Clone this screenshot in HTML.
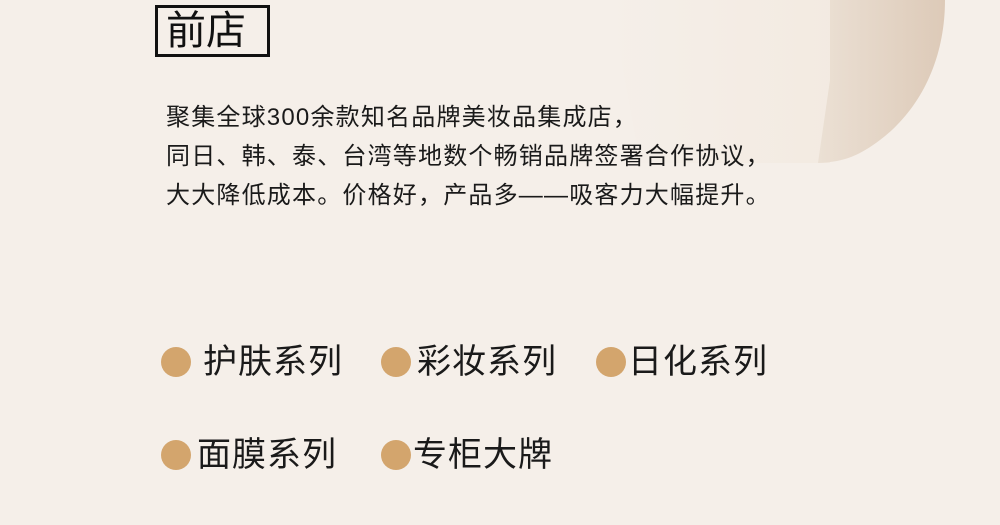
<!DOCTYPE html>
<html><head><meta charset="utf-8"><style>
body{margin:0;width:1000px;height:525px;overflow:hidden;background:#f5efe9;position:relative;font-family:"Liberation Sans","Noto Sans CJK SC",sans-serif;color:#1a1a1a}
.t{position:absolute;left:155px;top:5px;width:101px;height:46px;border:3px solid #111;font-size:40px;line-height:46px;padding-left:8px;box-sizing:content-box;color:#111}
.p{position:absolute;left:166px;font-size:24px;letter-spacing:1.2px;white-space:nowrap;line-height:28px}
.d{position:absolute;width:30px;height:30px;border-radius:50%;background:#d3a56d}
.l{position:absolute;font-size:34px;line-height:40px;white-space:nowrap;letter-spacing:1px}
</style></head><body>
<svg width="1000" height="525" style="position:absolute;left:0;top:0">
<defs><linearGradient id="g1" x1="0" y1="0" x2="1" y2="0"><stop offset="0" stop-color="#f5efe9"/><stop offset="1" stop-color="#f2e9df"/></linearGradient>
<linearGradient id="g2" x1="0" y1="0" x2="1" y2="0"><stop offset="0" stop-color="#ebe0d4"/><stop offset="1" stop-color="#ddcab8"/></linearGradient></defs>
<path d="M610 0 L840 0 L830 163 L640 163 Z" fill="url(#g1)" opacity="0.8"/>
<path d="M830 0 L945 0 C945 60 920 110 880 140 C860 155 845 162 818 163 L830 80 Z" fill="url(#g2)"/>
</svg>
<div class="t">前店</div>
<div class="p" style="top:104px">聚集全球300余款知名品牌美妆品集成店，</div>
<div class="p" style="top:143px">同日、韩、泰、台湾等地数个畅销品牌签署合作协议，</div>
<div class="p" style="top:182px">大大降低成本。价格好，产品多——吸客力大幅提升。</div>
<div class="d" style="left:161px;top:347px"></div><div class="l" style="left:203px;top:342px">护肤系列</div>
<div class="d" style="left:381px;top:347px"></div><div class="l" style="left:417px;top:342px">彩妆系列</div>
<div class="d" style="left:596px;top:347px"></div><div class="l" style="left:628px;top:342px">日化系列</div>
<div class="d" style="left:161px;top:440px"></div><div class="l" style="left:197px;top:435px">面膜系列</div>
<div class="d" style="left:381px;top:440px"></div><div class="l" style="left:413px;top:435px">专柜大牌</div>
</body></html>
